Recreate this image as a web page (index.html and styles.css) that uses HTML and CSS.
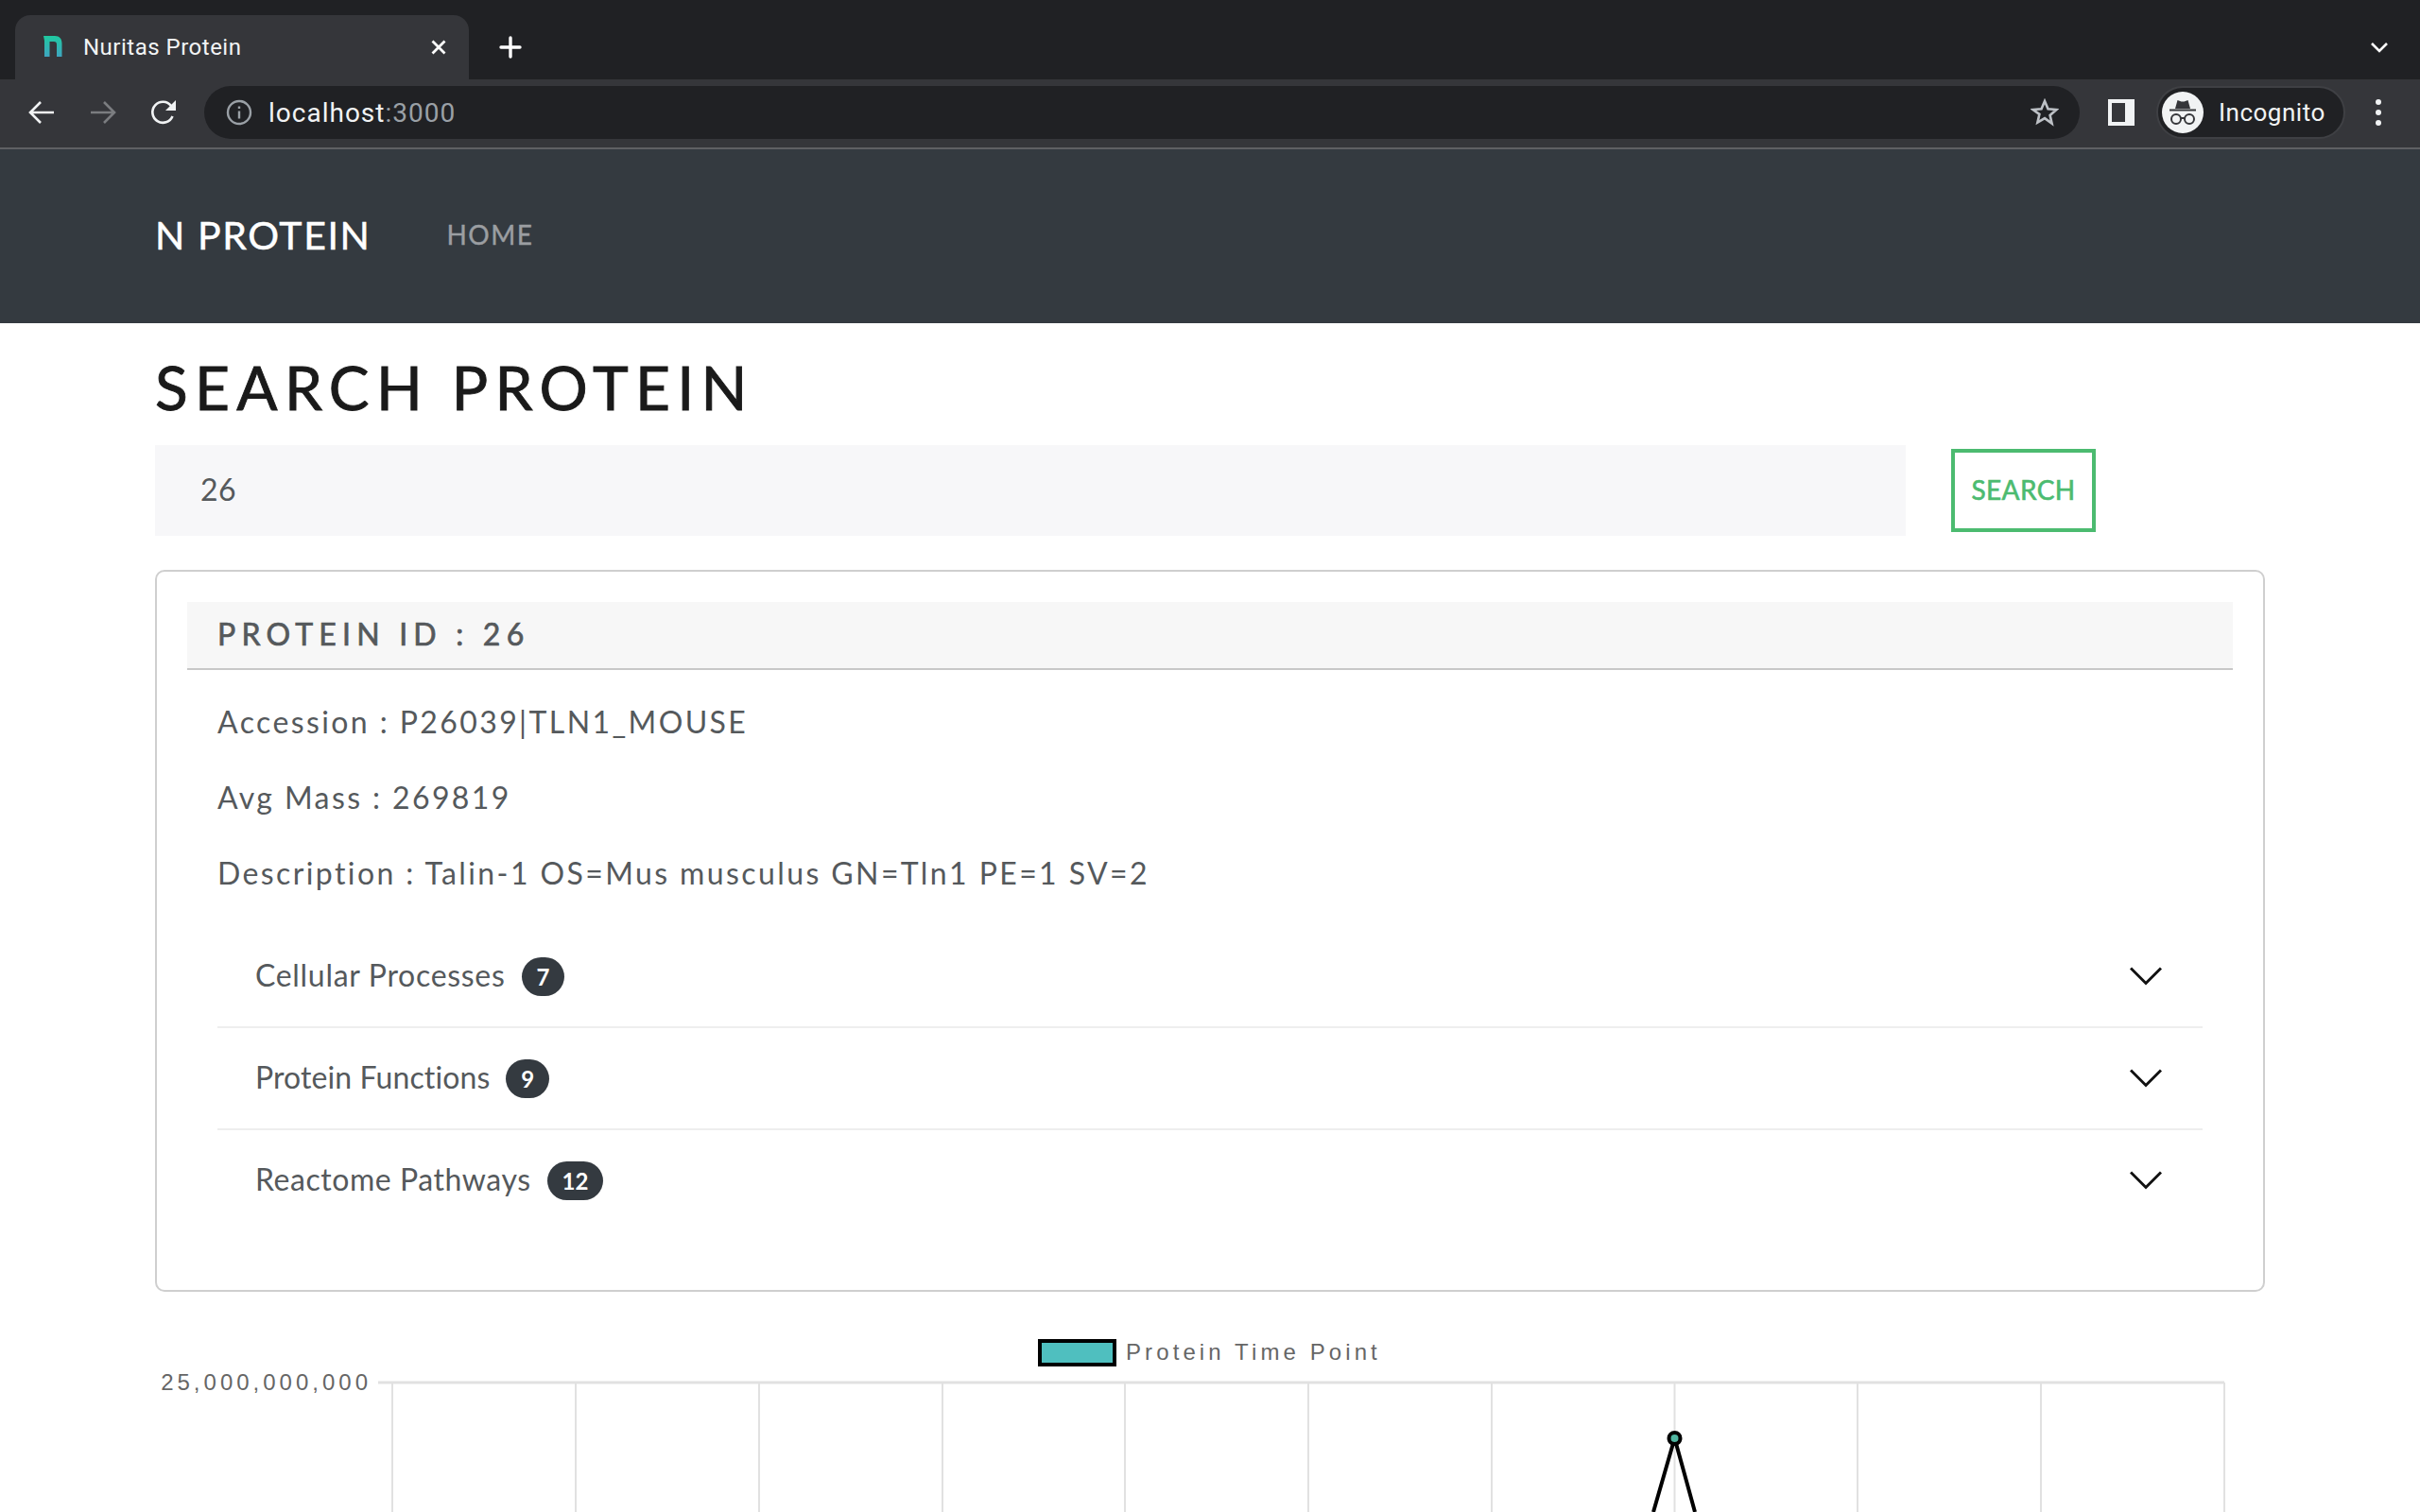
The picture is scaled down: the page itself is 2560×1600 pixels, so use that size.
FILE: index.html
```html
<!DOCTYPE html>
<html lang="en">
<head>
<meta charset="utf-8">
<title>Nuritas Protein</title>
<link rel="stylesheet" href="styles.css">
</head>
<body>
<header class="browser">
  <div class="tabstrip">
    <div class="tab">
      <svg class="favicon" width="20" height="22" viewBox="0 0 20 22">
        <defs><linearGradient id="fav" x1="0" y1="0" x2="0" y2="1"><stop offset="0" stop-color="#1fc9a0"/><stop offset="1" stop-color="#3fa5c0"/></linearGradient></defs>
        <path fill="url(#fav)" d="M0 0H12C17 0 19.500 3 19.500 8V22H14V9C14 7 13 6 11 6H6.500V22H1V5z"/>
      </svg>
      <span class="tab-title">Nuritas Protein</span>
      <svg class="tab-close" width="16" height="16" viewBox="0 0 16 16"><path d="M1.500 1.500l13 13M14.500 1.500l-13 13" stroke="#fff" stroke-width="2.800" fill="none"/></svg>
    </div>
    <svg class="new-tab" width="24" height="24" viewBox="0 0 24 24"><path d="M12 2v20M2 12h20" stroke="#fff" stroke-width="3.400" stroke-linecap="round" fill="none"/></svg>
    <svg class="tab-list" width="20" height="12" viewBox="0 0 20 12"><path d="M2 2l8 8 8-8" stroke="#fff" stroke-width="2.600" fill="none"/></svg>
  </div>
  <div class="toolbar">
    <svg class="nav-icon" width="28" height="26" viewBox="0 0 28 26"><path d="M27 13H3M13 2L2 13l11 11" stroke="#f1f3f4" stroke-width="2.600" fill="none"/></svg>
    <svg class="nav-icon dim" width="28" height="26" viewBox="0 0 28 26"><path d="M1 13h24M15 2l11 11-11 11" stroke="#7b7d80" stroke-width="2.600" fill="none"/></svg>
    <svg class="nav-icon reload" width="28" height="28" viewBox="0 0 28 28"><path d="M23.500 18a11 11 0 1 1-1.500-11" stroke="#f1f3f4" stroke-width="2.600" fill="none"/><path d="M27 1v11H16z" fill="#f1f3f4"/></svg>
    <div class="omnibox">
      <svg class="info" width="28" height="28" viewBox="0 0 28 28"><circle cx="14" cy="14" r="12" stroke="#9aa0a6" stroke-width="2.400" fill="none"/><path d="M12.800 12.500h2.400v8h-2.400zM12.800 7.500h2.400v2.600h-2.400z" fill="#9aa0a6"/></svg>
      <span class="url">localhost<span class="url-port">:3000</span></span>
      <svg class="star" width="30" height="30" viewBox="0 0 30 30"><path d="M15 3l3.500 8.200 8.900.8-6.800 5.900 2 8.700L15 21.100l-7.600 4.500 2-8.700L2.600 12l8.900-.8z" stroke="#bdc1c6" stroke-width="2.600" fill="none"/></svg>
    </div>
    <svg class="side-panel" width="28" height="28" viewBox="0 0 28 28"><path fill-rule="evenodd" fill="#f1f3f4" d="M0 0h28v28H0zM4 4v20h14V4z"/></svg>
    <div class="profile">
      <svg class="avatar" width="44" height="44" viewBox="0 0 44 44">
        <circle cx="22" cy="22" r="22" fill="#f1f3f4"/>
        <path d="M14 18l2.500-9 4 1.500h3l4-1.500 2.500 9z" fill="#35363a"/>
        <path d="M8 19.500h28" stroke="#35363a" stroke-width="2"/>
        <circle cx="15" cy="29" r="5" stroke="#35363a" stroke-width="2" fill="none"/>
        <circle cx="29" cy="29" r="5" stroke="#35363a" stroke-width="2" fill="none"/>
        <path d="M20 28h4" stroke="#35363a" stroke-width="2"/>
      </svg>
      <span class="profile-name">Incognito</span>
    </div>
    <div class="menu-dots"><i></i><i></i><i></i></div>
  </div>
</header>

<nav class="navbar">
  <span class="brand">N PROTEIN</span>
  <span class="nav-link">HOME</span>
</nav>

<main class="content">
  <h1 class="title">SEARCH PROTEIN</h1>
  <form class="search">
    <div class="search-input">26</div>
    <div class="search-btn">SEARCH</div>
  </form>

  <section class="card">
    <div class="card-header">PROTEIN ID : 26</div>
    <div class="card-body">
      <p class="field">Accession : P26039|TLN1_MOUSE</p>
      <p class="field">Avg Mass : 269819</p>
      <p class="field">Description : Talin-1 OS=Mus musculus GN=Tln1 PE=1 SV=2</p>
      <div class="accordion">
        <div class="acc-row"><span class="acc-label">Cellular Processes</span><span class="badge">7</span>
          <svg class="chev" width="34" height="20" viewBox="0 0 34 20"><path d="M1 1.500l16 16 16-16" stroke="#111" stroke-width="3" fill="none"/></svg></div>
        <div class="acc-row"><span class="acc-label">Protein Functions</span><span class="badge">9</span>
          <svg class="chev" width="34" height="20" viewBox="0 0 34 20"><path d="M1 1.500l16 16 16-16" stroke="#111" stroke-width="3" fill="none"/></svg></div>
        <div class="acc-row"><span class="acc-label">Reactome Pathways</span><span class="badge">12</span>
          <svg class="chev" width="34" height="20" viewBox="0 0 34 20"><path d="M1 1.500l16 16 16-16" stroke="#111" stroke-width="3" fill="none"/></svg></div>
      </div>
    </div>
  </section>

  <svg class="chart" width="2232" height="233" viewBox="164 1367 2232 233">
    <rect class="swatch" x="1100" y="1419" width="79" height="25"/>
    <text class="legend" x="1191" y="1439">Protein Time Point</text>
    <text class="tick" x="393" y="1471" text-anchor="end">25,000,000,000</text>
    <path class="grid" d="M415 1463V1600M609 1463V1600M803 1463V1600M997 1463V1600M1190 1463V1600M1384 1463V1600M1578 1463V1600M1771.500 1463V1600M1965 1463V1600M2159 1463V1600M2353 1463V1600"/>
    <path class="grid-top" d="M400 1463H2353"/>
    <path class="series" d="M1749 1600L1771.500 1522L1793 1600"/>
    <ellipse class="point" cx="1771.500" cy="1522" rx="6" ry="6"/>
  </svg>
</main>
</body>
</html>
```
FILE: styles.css
```css
* { box-sizing: border-box; }
html, body { margin: 0; padding: 0; }
body { width: 2560px; height: 1600px; overflow: hidden; background: #fff; font-family: "Lato", "Open Sans", sans-serif; }

.browser { font-family: "Roboto", sans-serif; color: #fff; }
.tabstrip { height: 84px; background: #202124; display: flex; align-items: flex-end; padding-left: 16px; position: relative; }
.tab { width: 480px; height: 68px; background: #35363a; border-radius: 16px 16px 0 0; display: flex; align-items: center; padding: 0 24px 0 30px; }
.favicon { flex: none; margin-right: 23px; margin-top: -2px; }
.tab-title { font-size: 24px; letter-spacing: .5px; flex: 1; color: #f1f3f4; margin-top: -1px; margin-left: -1px; }
.new-tab { margin: 0 0 22px 32px; }
.tab-list { margin: 0 33px 28px auto; }

.toolbar { height: 74px; background: #35363a; border-bottom: 2px solid #5f6063; display: flex; align-items: center; padding: 0 0 2px 30px; }
.nav-icon { flex: none; margin-right: 37px; }
.nav-icon.dim { margin-right: 36px; }
.nav-icon.reload { margin-right: 29px; }
.omnibox { width: 1984px; height: 56px; background: #202124; border-radius: 28px; display: flex; align-items: center; padding: 0 22px 0 23px; }
.url { font-size: 28px; letter-spacing: 1px; color: #f1f3f4; margin-left: 17px; flex: 1; padding-top: 1px; }
.url-port { color: #9aa0a6; }
.side-panel { margin-left: 30px; flex: none; }
.profile { width: 200px; height: 56px; margin-left: 23px; background: #202124; border: 2px solid #3f4044; border-radius: 28px; display: flex; align-items: center; padding-left: 4px; }
.profile-name { font-size: 26px; letter-spacing: .5px; margin-left: 16px; color: #f1f3f4; }
.menu-dots { margin-left: 32px; display: flex; flex-direction: column; gap: 5px; }
.menu-dots i { width: 6px; height: 6px; border-radius: 50%; background: #f1f3f4; display: block; }

.navbar { height: 184px; background: #343a40; padding: 0 0 4px 164px; display: flex; align-items: center; }
.brand { font-size: 41px; color: #fff; letter-spacing: 1.600px; margin-right: 80px; line-height: 1; -webkit-text-stroke: .5px #fff; }
.nav-link { font-size: 28px; color: #9b9ea2; letter-spacing: 1.500px; -webkit-text-stroke: .4px #9b9ea2; }

.content { padding: 0 164px; }
.title { margin: 0; padding-top: 29px; height: 129px; font-size: 64px; font-weight: 400; letter-spacing: 7.300px; line-height: 77px; color: #1a1a1a; -webkit-text-stroke: .9px #1a1a1a; }
.search { display: flex; align-items: center; height: 96px; margin: 0 0 36px; }
.search-input { width: 1852px; height: 96px; background: #f7f7f9; color: #55595c; font-size: 32px; line-height: 94px; letter-spacing: .5px; padding-left: 48px; }
.search-btn { width: 153px; height: 88px; margin-left: 48px; padding-bottom: 2px; border: 4px solid #4cbb70; color: #4cbb70; font-size: 28px; font-weight: 400; letter-spacing: .4px; -webkit-text-stroke: .6px #4cbb70; display: flex; align-items: center; justify-content: center; }

.card { height: 764px; border: 2px solid #cfcfcf; border-radius: 10px; padding: 32px; }
.card-header { height: 72px; background: #f7f7f7; border-bottom: 2px solid #c8c8c8; padding-left: 32px; font-size: 32px; font-weight: 400; letter-spacing: 6.200px; line-height: 68px; color: #55595c; -webkit-text-stroke: .7px #55595c; }
.card-body { padding: 31px 32px 0; }
.field { margin: 0 0 32px; font-size: 32px; line-height: 48px; letter-spacing: 2.400px; color: #55595c; }
.acc-row { height: 108px; padding-left: 40px; border-bottom: 2px solid #eee; display: flex; align-items: center; color: #55595c; font-size: 32px; }
.acc-row:last-child { border-bottom-color: transparent; }
.acc-label { letter-spacing: .7px; margin-top: -4px; }
.acc-row:nth-child(2) .acc-label { letter-spacing: .1px; }
.acc-row:last-child .acc-label { letter-spacing: .55px; }
.badge { margin-left: 17px; min-width: 45px; height: 41px; padding: 0 16px; background: #343a40; color: #fff; border-radius: 21px; font-size: 24px; font-weight: 700; display: flex; align-items: center; justify-content: center; }
.chev { margin-left: auto; margin-right: 43px; }

.chart { display: block; }
.swatch { fill: #4fbfbf; stroke: #000; stroke-width: 4; }
.legend { font-family: "Liberation Sans", Arial, sans-serif; font-size: 24px; letter-spacing: 4.100px; fill: #666; }
.tick { font-family: "Liberation Sans", Arial, sans-serif; font-size: 24px; letter-spacing: 4px; fill: #666; }
.grid { stroke: #e1e1e1; stroke-width: 2; fill: none; }
.grid-top { stroke: #e1e1e1; stroke-width: 3; fill: none; }
.series { stroke: #000; stroke-width: 4; fill: none; }
.point { fill: #4fb5a0; stroke: #000; stroke-width: 4; }
```
